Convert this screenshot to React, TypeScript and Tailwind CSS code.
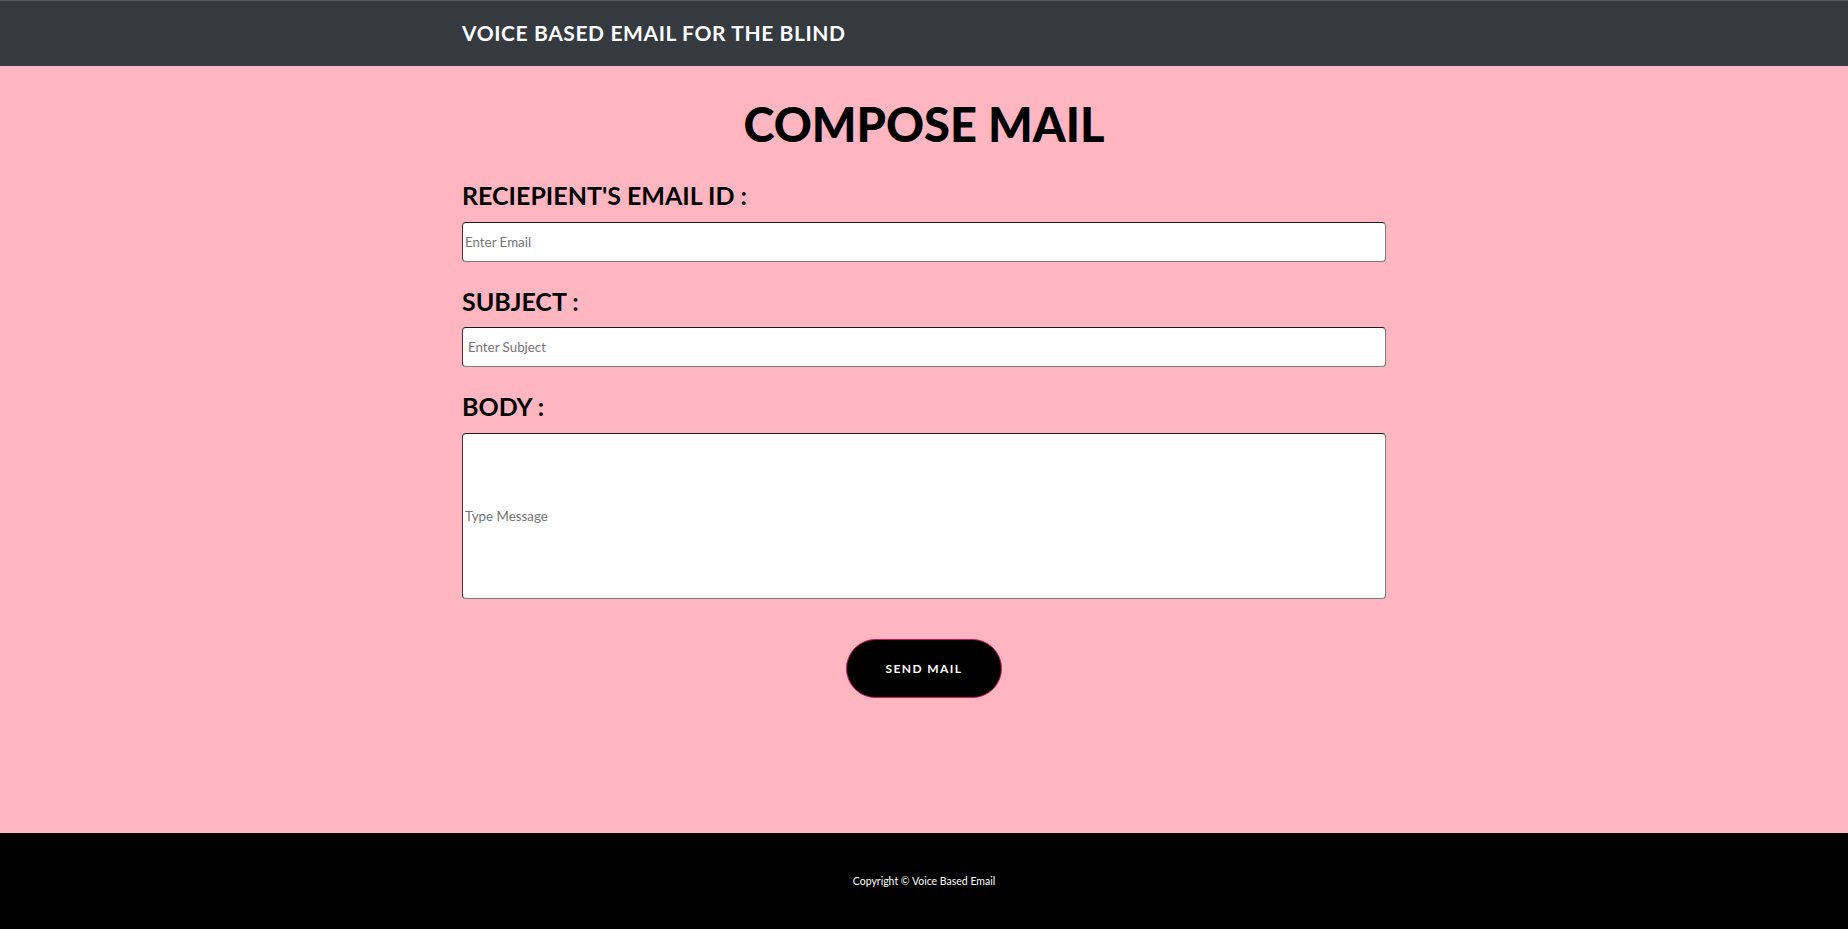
import { useState } from 'react';

// ── Compose mail page ─────────────────────────────────
const fieldBorder =
  'border border-t-[#1a1a1a] border-l-[#3a3a3a] border-r-[#7a7a7a] border-b-[#7a7a7a] rounded-[4px] bg-white';

function Label({ children, className }: { children: string; className: string }) {
  return (
    <label
      className={`block text-[25px] leading-[29px] font-bold text-black ${className}`}
    >
      {children}
    </label>
  );
}

export default function App() {
  const [email, setEmail] = useState('');
  const [subject, setSubject] = useState('');
  const [body, setBody] = useState('');

  return (
    <div
      className="flex flex-col h-[929px] bg-[#ffb6c1]"
      style={{ fontFamily: 'Lato, "Open Sans", sans-serif' }}
    >
      {/* Navbar */}
      <header className="h-[66px] shrink-0 bg-[#343a40] border-t border-[#55595e]">
        <div className="w-1/2 mx-auto pt-[14px]">
          <span className="text-[21px] leading-[36px] font-bold tracking-[0.6px] text-white">
            VOICE BASED EMAIL FOR THE BLIND
          </span>
        </div>
      </header>

      {/* Form */}
      <main className="flex-1 pt-[29px]">
        <div className="w-1/2 mx-auto flex flex-col">
          <h1 className="text-center text-[47px] leading-[58px] font-black text-black">
            COMPOSE MAIL
          </h1>

          <Label className="mt-[28px]">RECIEPIENT'S EMAIL ID :</Label>
          <input
            type="email"
            value={email}
            onChange={(e) => setEmail(e.target.value)}
            placeholder="Enter Email"
            className={`mt-[12px] h-[40px] px-[2px] text-[13.33px] placeholder:text-[#757575] outline-none ${fieldBorder}`}
          />

          <Label className="mt-[25px]">SUBJECT :</Label>
          <input
            type="text"
            value={subject}
            onChange={(e) => setSubject(e.target.value)}
            placeholder="Enter Subject"
            className={`mt-[11px] h-[40px] px-[5px] text-[13.33px] placeholder:text-[#757575] outline-none ${fieldBorder}`}
          />

          <Label className="mt-[25px]">BODY :</Label>
          <input
            type="text"
            value={body}
            onChange={(e) => setBody(e.target.value)}
            placeholder="Type Message"
            className={`mt-[12px] h-[166px] px-[2px] text-[13.33px] placeholder:text-[#757575] outline-none ${fieldBorder}`}
          />

          <button
            type="button"
            className="mt-[40px] self-center w-[156px] h-[59px] rounded-full bg-black border border-[#c2185b] text-white text-[12px] font-bold tracking-[1.4px]"
          >
            SEND MAIL
          </button>
        </div>
      </main>

      {/* Footer */}
      <footer className="h-[96px] shrink-0 bg-black flex items-center justify-center pt-[2px]">
        <p className="text-[10.5px] text-white">Copyright © Voice Based Email</p>
      </footer>
    </div>
  );
}
